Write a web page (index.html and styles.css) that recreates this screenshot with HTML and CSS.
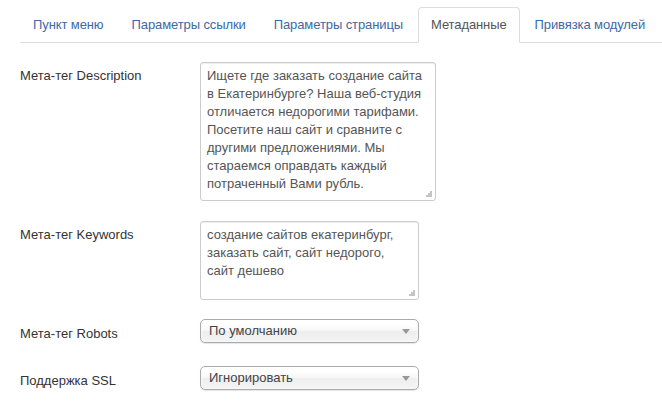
FILE: index.html
```html
<!DOCTYPE html>
<html lang="ru">
<head>
<meta charset="utf-8">
<link rel="stylesheet" href="styles.css">
</head>
<body>
<div class="page">
  <ul class="tabs">
    <li class="tab"><a>Пункт меню</a></li>
    <li class="tab"><a>Параметры ссылки</a></li>
    <li class="tab"><a>Параметры страницы</a></li>
    <li class="tab active"><a>Метаданные</a></li>
    <li class="tab"><a>Привязка модулей</a></li>
  </ul>
  <div class="form">
    <div class="row row-desc">
      <label class="label">Мета-тег Description</label>
      <div class="area-wrap area-desc">
        <textarea class="area">Ищете где заказать создание сайта в Екатеринбурге? Наша веб-студия отличается недорогими тарифами. Посетите наш сайт и сравните с другими предложениями. Мы стараемся оправдать каждый потраченный Вами рубль.</textarea>
        <svg class="grip" width="7" height="7" viewBox="0 0 7 7"><g fill="#c4c4c4"><rect x="5" y="1" width="2" height="2"/><rect x="3" y="3" width="2" height="2"/><rect x="5" y="3" width="2" height="2"/><rect x="1" y="5" width="2" height="2"/><rect x="3" y="5" width="2" height="2"/><rect x="5" y="5" width="2" height="2"/></g></svg>
      </div>
    </div>
    <div class="row row-keys">
      <label class="label">Мета-тег Keywords</label>
      <div class="area-wrap area-keys">
        <textarea class="area">создание сайтов екатеринбург, заказать сайт, сайт недорого, сайт дешево</textarea>
        <svg class="grip" width="7" height="7" viewBox="0 0 7 7"><g fill="#c4c4c4"><rect x="5" y="1" width="2" height="2"/><rect x="3" y="3" width="2" height="2"/><rect x="5" y="3" width="2" height="2"/><rect x="1" y="5" width="2" height="2"/><rect x="3" y="5" width="2" height="2"/><rect x="5" y="5" width="2" height="2"/></g></svg>
      </div>
    </div>
    <div class="row row-robots">
      <label class="label label-sel">Мета-тег Robots</label>
      <div class="select"><span>По умолчанию</span><i class="arrow"></i></div>
    </div>
    <div class="row">
      <label class="label label-sel">Поддержка SSL</label>
      <div class="select"><span>Игнорировать</span><i class="arrow"></i></div>
    </div>
  </div>
</div>
</body>
</html>
```
FILE: styles.css
```css
* { box-sizing: border-box; }
html, body { margin: 0; padding: 0; background: #fff; }
body {
  font-family: "Liberation Sans", Arial, sans-serif;
  font-size: 13px;
  line-height: 18px;
  color: #333;
  overflow: hidden;
}
.page { padding: 7px 0 0 20px; }
.tabs {
  list-style: none;
  margin: 0;
  padding: 0;
  display: flex;
  border-bottom: 1px solid #ddd;
  height: 36px;
}
.tab { flex: none; margin-right: 2px; margin-bottom: -1px; white-space: nowrap; }
.tab a {
  display: block;
  padding: 8px 12px;
  line-height: 18px;
  letter-spacing: -0.1px;
  border: 1px solid transparent;
  border-radius: 4px 4px 0 0;
  color: #3a6aa6;
}
.tab.active a {
  color: #555;
  background: #fff;
  border-color: #ddd #ddd transparent;
}
.form { padding-top: 19px; }
.row { display: flex; margin-bottom: 20px; }
.row-keys { margin-bottom: 19px; }
.row-robots { margin-bottom: 23px; }
.label { width: 180px; padding-top: 5px; color: #333; }
.label-sel { padding-top: 6px; }
.area-wrap { position: relative; }
.area-desc { width: 236px; height: 139px; }
.area-keys { width: 219px; height: 79px; }
.area {
  display: block;
  width: 100%;
  height: 100%;
  margin: 0;
  padding: 4px 6px;
  border: 1px solid #ccc;
  border-radius: 3px;
  box-shadow: inset 0 1px 1px rgba(0,0,0,0.075);
  font-family: "Liberation Sans", Arial, sans-serif;
  font-size: 13px;
  line-height: 18px;
  color: #555;
  resize: none;
  overflow: hidden;
}
.grip { position: absolute; right: 4px; bottom: 4px; }
.select {
  position: relative;
  width: 219px;
  height: 24px;
  padding-left: 8px;
  line-height: 22px;
  border: 1px solid #aaa;
  border-radius: 5px;
  background: linear-gradient(#fff 20%, #f6f6f6 50%, #eee 52%, #f4f4f4 100%);
  box-shadow: inset 0 0 3px #fff, 0 1px 1px rgba(0,0,0,0.1);
  color: #444;
}
.arrow {
  position: absolute;
  right: 8px;
  top: 9px;
  width: 0;
  height: 0;
  border-left: 4px solid transparent;
  border-right: 4px solid transparent;
  border-top: 5px solid #999;
}
```
